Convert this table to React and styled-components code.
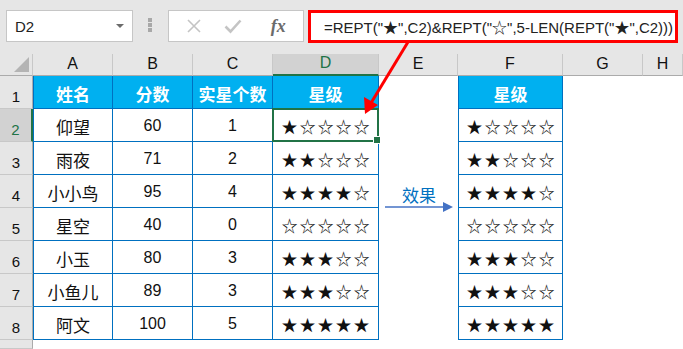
import React from 'react';
import styled, { createGlobalStyle, css } from 'styled-components';

const GlobalStyle = createGlobalStyle`
  html, body {
    margin: 0;
    padding: 0;
    background: #ffffff;
    overflow: hidden;
  }
  * {
    box-sizing: border-box;
  }
`;

const BLUE = '#0070c0';
const GREEN = '#217346';

const Page = styled.div`
  position: relative;
  width: 683px;
  height: 349px;
  overflow: hidden;
  font-family: "Liberation Sans", "Noto Sans CJK SC", sans-serif;
`;

const Toolbar = styled.div`
  display: flex;
  align-items: flex-start;
  height: 54px;
  padding: 10px 0 0 6px;
  background: #e6e6e6;
`;

const NameBox = styled.div`
  display: flex;
  align-items: center;
  justify-content: space-between;
  width: 127px;
  height: 32px;
  padding: 0 8px 0 8px;
  background: #fff;
  border: 1px solid #c6c6c6;
  font-size: 15px;
  color: #222;
`;

const DropTriangle = styled.span`
  width: 0;
  height: 0;
  border-left: 4px solid transparent;
  border-right: 4px solid transparent;
  border-top: 4px solid #6b6b6b;
`;

const Grip = styled.div`
  display: flex;
  flex-direction: column;
  gap: 1px;
  margin: 8px 16px 0 15px;
  span {
    width: 4px;
    height: 4px;
    background: #a8a8a8;
  }
`;

const IconBox = styled.div`
  display: flex;
  align-items: center;
  justify-content: space-around;
  width: 136px;
  height: 32px;
  padding: 0 6px;
  background: #fff;
  border: 1px solid #c6c6c6;
`;

const Fx = styled.span`
  font-family: "Liberation Serif", serif;
  font-style: italic;
  font-weight: bold;
  font-size: 18px;
  color: #6b6b6b;
  margin-left: 6px;
`;

const FormulaBox = styled.div`
  display: flex;
  align-items: center;
  width: 370px;
  height: 33px;
  margin-left: 4px;
  padding-left: 13px;
  background: #fff;
  border: 3px solid #ff0000;
  font-family: "Liberation Sans", "Noto Sans CJK SC", sans-serif;
  font-size: 15px;
  color: #222;
  white-space: nowrap;
  overflow: hidden;
`;

const Sheet = styled.div`
  display: grid;
  grid-template-columns: 33px 80px 80px 80px 106px 79px 105px 80px 1fr;
  grid-template-rows: 22px repeat(8, 33px) 1fr;
  height: 295px;
`;

const Corner = styled.div`
  position: relative;
  background: #e6e6e6;
  border-right: 1px solid #c8c8c8;
  border-bottom: 1px solid #ababab;
  &::after {
    content: '';
    position: absolute;
    right: 3px;
    bottom: 3px;
    width: 0;
    height: 0;
    border-left: 15px solid transparent;
    border-bottom: 15px solid #b4b4b4;
  }
`;

const ColHead = styled.div`
  display: flex;
  align-items: flex-end;
  justify-content: center;
  padding-bottom: 2px;
  background: ${(p) => (p.$active ? '#d2d2d2' : '#e6e6e6')};
  border-right: 1px solid #c8c8c8;
  border-bottom: ${(p) => (p.$active ? `2px solid ${GREEN}` : '1px solid #ababab')};
  color: ${(p) => (p.$active ? GREEN : '#111')};
  font-size: 16px;
`;

const RowHead = styled.div`
  display: flex;
  align-items: flex-end;
  justify-content: center;
  padding-bottom: 3px;
  background: ${(p) => (p.$active ? '#d2d2d2' : '#e6e6e6')};
  border-right: ${(p) => (p.$active ? `2px solid ${GREEN}` : '1px solid #ababab')};
  border-bottom: 1px solid #c8c8c8;
  color: ${(p) => (p.$active ? GREEN : '#111')};
  font-size: 15px;
`;

const Cell = styled.div`
  position: relative;
  display: flex;
  align-items: center;
  justify-content: center;
  padding-top: 2px;
  font-size: 16px;
  color: #111;
  ${(p) =>
    p.$boxed &&
    css`
      border-right: 1px solid ${BLUE};
      border-bottom: 1px solid ${BLUE};
    `}
  ${(p) => p.$left && css`border-left: 1px solid ${BLUE};`}
  ${(p) =>
    p.$head &&
    css`
      background: #00b0f0;
      color: #fff;
      font-weight: bold;
      font-size: 17px;
    `}
  ${(p) =>
    p.$selected &&
    css`
      &::after {
        content: '';
        position: absolute;
        left: -1px;
        top: -1px;
        right: -1px;
        bottom: -1px;
        border: 2px solid ${GREEN};
      }
      &::before {
        content: '';
        position: absolute;
        right: -3px;
        bottom: -3px;
        width: 6px;
        height: 6px;
        background: ${GREEN};
        border: 1px solid #fff;
        z-index: 2;
      }
    `}
`;

const CjkText = styled.span`
  font-family: "Noto Sans CJK SC", sans-serif;
  font-size: 17px;
`;

const Stars = styled.span`
  font-family: "Noto Sans CJK SC", sans-serif;
  font-size: 16px;
  letter-spacing: 2px;
  margin-right: -2px;
`;

const Overlay = styled.svg`
  position: absolute;
  left: 0;
  top: 0;
  pointer-events: none;
`;

const EffectLabel = styled.div`
  position: absolute;
  left: 402px;
  top: 182px;
  font-family: "Noto Sans CJK SC", sans-serif;
  font-size: 17px;
  color: ${BLUE};
`;

const rows = [
  ['仰望', 60, 1],
  ['雨夜', 71, 2],
  ['小小鸟', 95, 4],
  ['星空', 40, 0],
  ['小玉', 80, 3],
  ['小鱼儿', 89, 3],
  ['阿文', 100, 5],
];

const stars = (n) => '★'.repeat(n) + '☆'.repeat(5 - n);

const cols = ['A', 'B', 'C', 'D', 'E', 'F', 'G', 'H'];

const App = () => {
  return (
    <Page>
      <GlobalStyle />
      <Toolbar>
        <NameBox>
          <span>D2</span>
          <DropTriangle />
        </NameBox>
        <Grip>
          <span />
          <span />
          <span />
        </Grip>
        <IconBox>
          <svg width="16" height="16" viewBox="0 0 16 16">
            <path d="M2 2 L14 14 M14 2 L2 14" stroke="#c4c4c4" strokeWidth="1.6" fill="none" />
          </svg>
          <svg width="18" height="16" viewBox="0 0 18 16">
            <path d="M1.5 8.5 L6.5 13.5 L16.5 2.5" stroke="#c4c4c4" strokeWidth="2.6" fill="none" />
          </svg>
          <Fx>fx</Fx>
        </IconBox>
        <FormulaBox>=REPT("★",C2)&amp;REPT("☆",5-LEN(REPT("★",C2)))</FormulaBox>
      </Toolbar>

      <Sheet>
        <Corner />
        {cols.map((c) => (
          <ColHead key={c} $active={c === 'D'}>
            {c}
          </ColHead>
        ))}

        <RowHead>1</RowHead>
        <Cell $boxed $left $head>
          <CjkText>姓名</CjkText>
        </Cell>
        <Cell $boxed $head>
          <CjkText>分数</CjkText>
        </Cell>
        <Cell $boxed $head>
          <CjkText>实星个数</CjkText>
        </Cell>
        <Cell $boxed $head>
          <CjkText>星级</CjkText>
        </Cell>
        <Cell />
        <Cell $boxed $left $head>
          <CjkText>星级</CjkText>
        </Cell>
        <Cell />
        <Cell />

        {rows.map(([name, score, n], i) => (
          <React.Fragment key={name}>
            <RowHead $active={i === 0}>{i + 2}</RowHead>
            <Cell $boxed $left>
              <CjkText>{name}</CjkText>
            </Cell>
            <Cell $boxed>{score}</Cell>
            <Cell $boxed>{n}</Cell>
            <Cell $boxed $selected={i === 0}>
              <Stars>{stars(n)}</Stars>
            </Cell>
            <Cell />
            <Cell $boxed $left>
              <Stars>{stars(n)}</Stars>
            </Cell>
            <Cell />
            <Cell />
          </React.Fragment>
        ))}

        <RowHead />
      </Sheet>

      <EffectLabel>效果</EffectLabel>
      <Overlay width="683" height="349" viewBox="0 0 683 349">
        <line x1="385" y1="207" x2="444" y2="207" stroke="#4472c4" strokeWidth="1.5" />
        <polygon points="443,202 453,207 443,212" fill="#4472c4" />
        <line x1="408" y1="42" x2="371" y2="103" stroke="#ff0000" strokeWidth="3" />
        <polygon points="365,114 364,97 378,105" fill="#ff0000" />
      </Overlay>
    </Page>
  );
};

export default App;
